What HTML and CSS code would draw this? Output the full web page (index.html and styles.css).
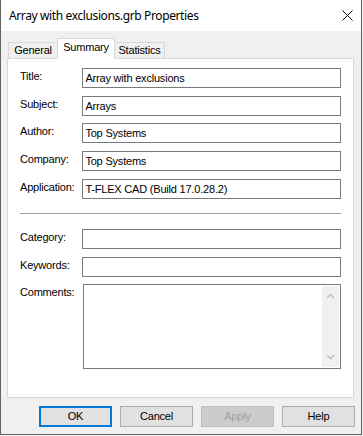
FILE: index.html
```html
<!DOCTYPE html>
<html>
<head>
<meta charset="utf-8">
<link rel="stylesheet" href="styles.css">
</head>
<body>
<div class="window">
  <div class="titlebar">
    <span class="title">Array with exclusions.grb Properties</span>
    <svg class="close" width="11" height="11" viewBox="0 0 11 11"><path d="M0.5 0.5 L10.5 10.5 M10.5 0.5 L0.5 10.5" stroke="#000" stroke-width="1" fill="none"/></svg>
  </div>
  <div class="body">
    <div class="tabs">
      <div class="tab first">General</div>
      <div class="tab active">Summary</div>
      <div class="tab last">Statistics</div>
    </div>
    <div class="panel">
      <div class="group">
        <div class="row"><span class="label">Title:</span><div class="field">Array with exclusions</div></div>
        <div class="row"><span class="label">Subject:</span><div class="field">Arrays</div></div>
        <div class="row tight"><span class="label">Author:</span><div class="field">Top Systems</div></div>
        <div class="row"><span class="label">Company:</span><div class="field">Top Systems</div></div>
        <div class="row"><span class="label">Application:</span><div class="field">T-FLEX CAD (Build 17.0.28.2)</div></div>
      </div>
      <div class="sep"></div>
      <div class="group">
        <div class="row"><span class="label">Category:</span><div class="field"></div></div>
        <div class="row"><span class="label">Keywords:</span><div class="field"></div></div>
        <div class="row tight"><span class="label">Comments:</span>
          <div class="field area">
            <div class="area-text"></div>
            <div class="vscroll">
              <svg width="9" height="6" viewBox="0 0 9 6"><path d="M1 5 L4.5 1.5 L8 5" stroke="#c2c2c2" stroke-width="1.6" fill="none"/></svg>
              <svg width="9" height="6" viewBox="0 0 9 6"><path d="M1 1 L4.5 4.5 L8 1" stroke="#c2c2c2" stroke-width="1.6" fill="none"/></svg>
            </div>
          </div>
        </div>
      </div>
    </div>
    <div class="buttons">
      <div class="btn default">OK</div>
      <div class="btn">Cancel</div>
      <div class="btn disabled">Apply</div>
      <div class="btn">Help</div>
    </div>
  </div>
</div>
</body>
</html>
```
FILE: styles.css
```css
html, body {
  margin: 0;
  padding: 0;
  background: #f0f0f0;
}
body {
  width: 363px;
  height: 436px;
  overflow: hidden;
  font-family: "Liberation Sans", Arial, sans-serif;
  font-size: 11px;
  letter-spacing: -0.2px;
  color: #000;
}
.window {
  width: 360px;
  height: 434px;
  border-left: 1px solid #616161;
  border-right: 1px solid #616161;
  border-bottom: 1px solid #616161;
  background: #f0f0f0;
  display: flex;
  flex-direction: column;
}
.titlebar {
  height: 31px;
  background: #fff;
  display: flex;
  align-items: center;
  justify-content: space-between;
  padding: 0 8px 0 8px;
  flex: none;
}
.title {
  font-family: "Noto Sans", "Open Sans", sans-serif;
  font-size: 12px;
  letter-spacing: -0.38px;
  line-height: 31px;
  height: 31px;
  margin-top: -1px;
}
.close {
  display: block;
  margin-top: -1px;
}
.body {
  flex: 1;
  display: flex;
  flex-direction: column;
}
.tabs {
  display: flex;
  align-items: flex-end;
  margin: 7px 0 0 7px;
  height: 20px;
  position: relative;
  z-index: 1;
}
.tab {
  height: 15px;
  line-height: 15px;
  border-top: 1px solid #d9d9d9;
  background: #f0f0f0;
  text-align: center;
  box-sizing: content-box;
}
.tab.first {
  width: 48px;
  border-left: 1px solid #d9d9d9;
}
.tab.active {
  width: 56px;
  height: 20px;
  line-height: 17px;
  background: #fff;
  border-left: 1px solid #d9d9d9;
  border-right: 1px solid #d9d9d9;
  margin-bottom: -1px;
}
.tab.last {
  width: 49px;
  border-right: 1px solid #d9d9d9;
}
.panel {
  margin: 0 7px 0 6px;
  height: 329px;
  border: 1px solid #d9d9d9;
  background: #fff;
  padding: 9px 12px 0 12px;
  box-sizing: content-box;
  display: flex;
  flex-direction: column;
}
.group {
  display: flex;
  flex-direction: column;
  gap: 8px;
}
.row {
  display: flex;
  align-items: flex-start;
}
.row.tight {
  margin-top: -1px;
}
.label {
  width: 63px;
  line-height: 16px;
  white-space: nowrap;
}
.field {
  width: 257px;
  height: 18px;
  border: 1px solid #7a7a7a;
  padding-left: 2px;
  line-height: 18px;
  white-space: nowrap;
  box-sizing: content-box;
}
.field.area {
  height: 81px;
  padding: 1px 1px 1px 2px;
  width: 254px;
  display: flex;
}
.area-text {
  flex: 1;
}
.vscroll {
  width: 17px;
  background: #f0f0f0;
  display: flex;
  flex-direction: column;
  justify-content: space-between;
  align-items: center;
  padding: 7px 0 7px 0;
  box-sizing: border-box;
}
.vscroll svg {
  display: block;
}
.sep {
  height: 1px;
  background: #a0a0a0;
  margin: 14px 1px 15px 0;
  width: 321px;
}
.buttons {
  display: flex;
  justify-content: flex-end;
  gap: 8px;
  margin: 8px 6px 0 0;
}
.btn {
  width: 71px;
  height: 19px;
  border: 1px solid #adadad;
  background: #e1e1e1;
  text-align: center;
  line-height: 19px;
  box-sizing: content-box;
}
.btn.default {
  width: 69px;
  height: 17px;
  line-height: 17px;
  border: 2px solid #0078d7;
}
.btn.disabled {
  background: #cccccc;
  border-color: #bfbfbf;
  color: #a0a0a0;
}
```
